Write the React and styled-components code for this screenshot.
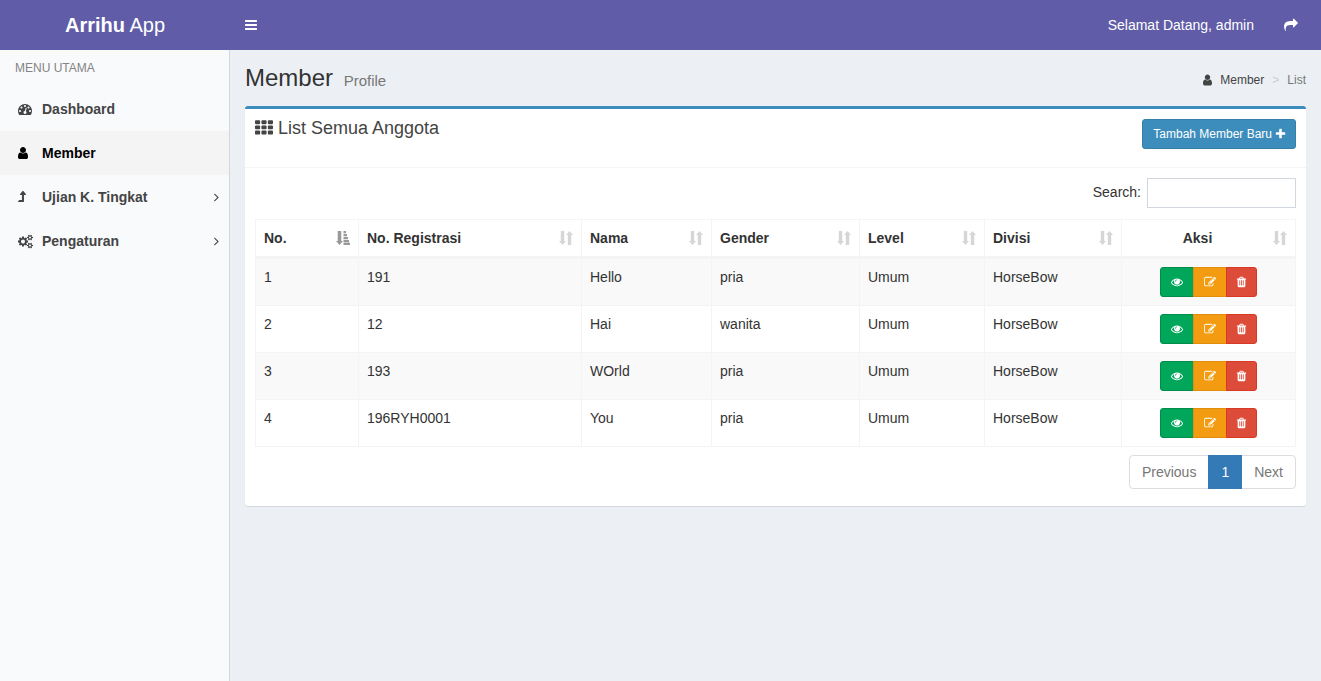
import React, { useState } from 'react';
import styled, { createGlobalStyle, css } from 'styled-components';

const GlobalStyle = createGlobalStyle`
  *, *::before, *::after { box-sizing: border-box; }
  body {
    margin: 0;
    background: #ecf0f5;
    color: #333;
    font-family: "Liberation Sans", Arial, sans-serif;
    font-size: 14px;
    line-height: 20px;
  }
  a { text-decoration: none; color: inherit; }
  button, input { font-family: inherit; }
`;

/* Icon outlines on a 1792-unit grid: [left, width, path] */
const dot = 'q0-53-37.5-90.5t-90.5-37.5-90.5 37.5-37.5 90.5 37.5 90.5 90.5 37.5 90.5-37.5 37.5-90.5z';
const smallCog =
  'v140q0 16-149 31-12 27-30 52 51 113 51 138 0 4-4 7-122 71-124 71-8 0-46-47t-52-68q-20 2-30 2t-30-2q-14 21-52 68t-46 47q-2 0-124-71-4-3-4-7 0-25 51-138-18-25-30-52-149-15-149-31v-140q0-16 149-31 13-29 30-52-51-113-51-138 0-4 4-7 4-2 35-20t59-34 30-16q8 0 46 46.5t52 67.5q20-2 30-2t30 2q51-71 92-112l6-2q4 0 124 70 4 3 4 7 0 25-51 138 17 23 30 52 149 15 149 31z';
const bar = 'v128q0 26-19 45t-45 19h-1408q-26 0-45-19t-19-45v-128q0-26 19-45t45-19h1408q26 0 45 19t19 45z';
const cell = 'v192q0 40-28 68t-68 28h-320q-40 0-68-28t-28-68v-192q0-40 28-68t68-28h320q40 0 68 28t28 68z';
const slot = 'v-704q0-14-9-23t-23-9h-64q-14 0-23 9t-9 23v704q0 14 9 23t23 9h64q14 0 23-9t9-23z';

const ICONS = {
  bars: [128, 1536, `M1664 1344${bar}M1664 832${bar}M1664 320${bar}`],
  th: [0, 1792, [512, 1152, 1792].map((x) => [224, 736, 1248].map((y) => `M${x} ${y}${cell}`).join('')).join('')],
  plus: [192, 1408, 'M1600 736v192q0 40-28 68t-68 28h-416v416q0 40-28 68t-68 28h-192q-40 0-68-28t-28-68v-416h-416q-40 0-68-28t-28-68v-192q0-40 28-68t68-28h416v-416q0-40 28-68t68-28h192q40 0 68 28t28 68v416h416q40 0 68 28t28 68z'],
  eye: [0, 1792, 'M1664 960q-152-236-381-353 61 104 61 225 0 185-131.5 316.5t-316.5 131.5-316.5-131.5-131.5-316.5q0-121 61-225-229 117-381 353 133 205 333.5 326.5t434.5 121.5 434.5-121.5 333.5-326.5zm-720-384q0-20-14-34t-34-14q-125 0-214.5 89.5t-89.5 214.5q0 20 14 34t34 14 34-14 14-34q0-86 61-147t147-61q20 0 34-14t14-34zm848 384q0 34-20 69-140 230-376.5 368.5t-499.5 138.5-499.5-139-376.5-368q-20-35-20-69t20-69q140-229 376.5-368t499.5-139 499.5 139 376.5 368q20 35 20 69z'],
  edit: [0, 1792, 'M888 1184l116-116-152-152-116 116v56h96v96h56zm440-720q-16-16-33 1l-350 350q-17 17-1 33t33-1l350-350q17-17 1-33zm80 594v190q0 119-84.5 203.5t-203.5 84.5h-832q-119 0-203.5-84.5t-84.5-203.5v-832q0-119 84.5-203.5t203.5-84.5h832q63 0 117 25 15 7 18 23 3 17-9 29l-49 49q-14 14-32 8-23-6-45-6h-832q-66 0-113 47t-47 113v832q0 66 47 113t113 47h832q66 0 113-47t47-113v-126q0-13 9-22l64-64q15-15 35-7t20 29zm-96-738l288 288-672 672h-288v-288zm444 132l-92 92-288-288 92-92q28-28 68-28t68 28l152 152q28 28 28 68t-28 68z'],
  trash: [192, 1408, `M704 1376${slot}M960 1376${slot}M1216 1376${slot}M672 384h448l-48-117q-7-9-17-11h-317q-10 2-17 11zm928 32v64q0 14-9 23t-23 9h-96v948q0 83-47 143.5t-113 60.5h-832q-66 0-113-58.5t-47-141.5v-952h-96q-14 0-23-9t-9-23v-64q0-14 9-23t23-9h309l70-167q15-37 54-63t79-26h320q40 0 79 26t54 63l70 167h309q14 0 23 9t9 23z`],
  share: [0, 1792, 'M1792 640q0 26-19 45l-512 512q-19 19-45 19t-45-19-19-45v-256h-224q-98 0-175.5 6t-154 21.5-133 42.5-105.5 69.5-80 101-48.5 138.5-17.5 181q0 55 5 123 0 6 2.5 23.5t2.5 26.5q0 15-8.5 25t-23.5 10q-16 0-28-17-7-9-13-22t-13.5-30-10.5-24q-127-285-127-451 0-199 53-333 162-403 875-403h224v-256q0-26 19-45t45-19 45 19l512 512q19 19 19 45z'],
  user: [256, 1280, 'M1536 1399q0 109-62.5 187t-150.5 78h-854q-88 0-150.5-78t-62.5-187q0-85 8.5-160.5t31.5-152 58.5-131 94-89 134.5-34.5q131 128 313 128t313-128q76 0 134.5 34.5t94 89 58.5 131 31.5 152 8.5 160.5zm-256-887q0 159-112.5 271.5t-271.5 112.5-271.5-112.5-112.5-271.5 112.5-271.5 271.5-112.5 271.5 112.5 112.5 271.5z'],
  dashboard: [0, 1792, `M384 1152${dot}M576 704${dot}M1004 1185l101-382q6-26-7.5-48.5t-38.5-29.5-48 6.5-30 39.5l-101 382q-60 5-107 43.5t-63 98.5q-20 77 20 146t117 89 146-20 89-117q16-60-6-117t-72-91zM1664 1152${dot}M1024 512${dot}M1472 704${dot}M1792 1152q0 261-141 483-19 29-54 29h-1402q-35 0-54-29-141-221-141-483 0-182 71-348t191-286 286-191 348-71 348 71 286 191 191 286 71 348z`],
  levelUp: [288, 1024, 'M1299 587q-18 37-58 37h-192v864q0 14-9 23t-23 9h-704q-21 0-29-18-8-20 4-35l160-192q9-11 25-11h320v-640h-192q-40 0-58-37-17-37 9-68l320-384q18-22 49-22t49 22l320 384q27 32 9 68z'],
  cogs: [0, 1920, `M896 960q0-106-75-181t-181-75-181 75-75 181 75 181 181 75 181-75 75-181zm768 512q0-52-38-90t-90-38-90 38-38 90q0 53 37.5 90.5t90.5 37.5 90.5-37.5 37.5-90.5zm0-1024q0-52-38-90t-90-38-90 38-38 90q0 53 37.5 90.5t90.5 37.5 90.5-37.5 37.5-90.5zm-384 421v185q0 10-7 19.5t-16 10.5l-155 24q-11 35-32 76 34 48 90 115 7 11 7 20 0 12-7 19-23 30-82.5 89.5t-78.5 59.5q-11 0-21-7l-115-90q-37 19-77 31-11 108-23 155-7 24-30 24h-186q-11 0-20-7.5t-10-17.5l-23-153q-34-10-75-31l-118 89q-7 7-20 7-11 0-21-8-144-133-144-160 0-9 7-19 10-14 41-53t47-61q-23-44-35-82l-152-24q-10-1-17-9.5t-7-19.5v-185q0-10 7-19.5t16-10.5l155-24q11-35 32-76-34-48-90-115-7-11-7-20 0-12 7-20 22-30 82-89t79-59q11 0 21 7l115 90q34-18 77-32 11-108 23-154 7-24 30-24h186q11 0 20 7.5t10 17.5l23 153q34 10 75 31l118-89q8-7 20-7 11 0 21 8 144 133 144 160 0 8-7 19-12 16-42 54t-45 60q23 48 34 82l152 23q10 2 17 10.5t7 19.5zM1920 1402${smallCog}M1920 378${smallCog}`],
  angleRight: [576, 640, 'M1171 960q0 13-10 23l-466 466q-10 10-23 10t-23-10l-50-50q-10-10-10-23t10-23l393-393-393-393q-10-10-10-23t10-23l50-50q10-10 23-10t23 10l466 466q10 10 10 23z'],
};

const Glyph = styled.svg`
  display: block;
  flex: none;
  fill: currentColor;
`;

function Icon({ name, size = 14 }) {
  const [left, width, path] = ICONS[name];
  return (
    <Glyph
      width={Math.round((width / 1792) * size)}
      height={size}
      viewBox={`${left} 0 ${width} 1792`}
      preserveAspectRatio="xMidYMid slice"
      overflow="visible"
      aria-hidden="true"
    >
      <path d={path} />
    </Glyph>
  );
}

function SortIcon({ active }) {
  return (
    <Glyph width="14" height="14" viewBox="0 0 14 14" aria-hidden="true">
      {active ? (
        <path d="M1.700 0h3.600v10H7L3.500 14 0 10h1.700zM7.500 0h2.500v2.200H7.500zM7.500 3h3.500v2.200H7.500zM7.500 6h4.500v2.200H7.500zM7.500 9h5.500v2.200H7.500zM7.500 11.800h6.500V14H7.500z" />
      ) : (
        <path d="M1.800 0h3.400v10H7L3.500 14 0 10h1.800zM8.800 14h3.400V4H14L10.500 0 7 4h1.800z" />
      )}
    </Glyph>
  );
}

const Header = styled.header`
  display: flex;
  height: 50px;
  background: #605ca8;
  color: #fff;
`;

const Logo = styled.a`
  flex: 0 0 230px;
  font-size: 20px;
  line-height: 50px;
  text-align: center;
`;

const Navbar = styled.nav`
  flex: 1;
  display: flex;
  align-items: center;
  padding-right: 8px;
`;

const Toggle = styled.button`
  padding: 15px;
  border: 0;
  background: none;
  color: inherit;
  cursor: pointer;
`;

const NavLink = styled.a`
  display: block;
  padding: 15px;
`;

const Welcome = styled.span`
  margin-left: auto;
  padding: 15px;
`;

const Layout = styled.div`
  display: flex;
  min-height: calc(100vh - 50px);
`;

const Sidebar = styled.aside`
  flex: 0 0 230px;
  background: #f9fafc;
  border-right: 1px solid #d2d6de;
`;

const MenuTitle = styled.div`
  padding: 10px 15px;
  color: #848484;
  font-size: 12px;
  line-height: 17px;
`;

const MenuList = styled.ul`
  margin: 0;
  padding: 0;
  list-style: none;
`;

const MenuLink = styled.a`
  display: flex;
  align-items: center;
  padding: 12px 10px 12px 18px;
  font-weight: bold;
  color: ${(p) => (p.$active ? '#000' : '#444')};
  background: ${(p) => (p.$active ? '#f4f4f5' : 'transparent')};
`;

const MenuIcon = styled.span`
  width: 24px;
`;

const MenuLabel = styled.span`
  flex: 1;
`;

const Main = styled.main`
  flex: 1;
  min-width: 0;
  padding: 15px;
`;

const PageHeader = styled.div`
  display: flex;
  align-items: center;
  justify-content: space-between;
  margin-bottom: 15px;
`;

const PageTitle = styled.h1`
  margin: 0;
  font-size: 24px;
  font-weight: normal;
  line-height: 26px;
`;

const Subtitle = styled.small`
  padding-left: 4px;
  font-size: 15px;
  line-height: 15px;
  color: #777;
`;

const Breadcrumb = styled.ol`
  display: flex;
  gap: 8px;
  margin: 0;
  padding: 4px 0 0;
  list-style: none;
  font-size: 12px;
  line-height: 18px;
  color: #777;
`;

const Crumb = styled.li`
  color: ${(p) => (p.$separator ? '#ccc' : 'inherit')};
`;

const CrumbLink = styled.a`
  display: flex;
  align-items: center;
  gap: 8px;
  color: #444;
`;

const Box = styled.section`
  background: #fff;
  border-top: 3px solid #3c8dbc;
  border-radius: 3px;
  box-shadow: 0 1px 1px rgba(0, 0, 0, 0.1);
`;

const BoxHeader = styled.div`
  display: flex;
  align-items: flex-start;
  justify-content: space-between;
  padding: 10px 10px 18px;
  border-bottom: 1px solid #f4f4f4;
`;

const BoxTitle = styled.h3`
  display: flex;
  align-items: center;
  gap: 5px;
  margin: 0;
  color: #444;
  font-size: 18px;
  font-weight: normal;
  line-height: 18px;
`;

const AddButton = styled.button`
  display: flex;
  align-items: center;
  gap: 4px;
  padding: 5px 10px;
  border: 1px solid #367fa9;
  border-radius: 3px;
  background: #3c8dbc;
  color: #fff;
  font-size: 12px;
  line-height: 18px;
  cursor: pointer;
`;

const BoxBody = styled.div`
  padding: 10px 10px 17px;
`;

const SearchLabel = styled.label`
  display: flex;
  align-items: baseline;
  justify-content: flex-end;
  gap: 6px;
  margin-bottom: 11px;
`;

const SearchInput = styled.input`
  width: 149px;
  height: 30px;
  padding: 5px 10px;
  border: 1px solid #d2d6de;
  border-radius: 0;
  background: #fff;
  font-size: 12px;
`;

const Table = styled.table`
  width: 100%;
  table-layout: fixed;
  border-collapse: separate;
  border-spacing: 0;
`;

const cellStyle = css`
  padding: 8px;
  border: 0 solid #f4f4f4;
  border-width: 1px 0 0 1px;
  text-align: left;
  vertical-align: top;
  &:last-child {
    border-right-width: 1px;
    text-align: center;
  }
`;

const HeadCell = styled.th`
  ${cellStyle}
  position: relative;
  padding-right: 30px;
  border-bottom-width: 2px;
  white-space: nowrap;
`;

const SortMark = styled.span`
  position: absolute;
  right: 8px;
  bottom: 11px;
  color: ${(p) => (p.$active ? '#999' : '#d6d6d6')};
`;

const Row = styled.tr`
  &:nth-child(odd) { background: #f9f9f9; }
  &:last-child > td { border-bottom-width: 1px; }
`;

const Cell = styled.td`
  ${cellStyle}
`;

const ButtonGroup = styled.div`
  display: flex;
  justify-content: center;
`;

const tones = {
  success: ['#00a65a', '#008d4c'],
  warning: ['#f39c12', '#e08e0b'],
  danger: ['#dd4b39', '#d73925'],
};

const ActionButton = styled.button`
  padding: 8px 10px;
  border: 1px solid ${(p) => tones[p.$tone][1]};
  background: ${(p) => tones[p.$tone][0]};
  color: #fff;
  cursor: pointer;
  &:first-child { border-radius: 3px 0 0 3px; }
  &:last-child { border-radius: 0 3px 3px 0; }
  & + & { margin-left: -1px; }
`;

const Pagination = styled.nav`
  display: flex;
  justify-content: flex-end;
  margin-top: 8px;
`;

const PageButton = styled.button`
  padding: 6px 12px;
  border: 1px solid ${(p) => (p.$active ? '#337ab7' : '#ddd')};
  background: ${(p) => (p.$active ? '#337ab7' : '#fff')};
  color: ${(p) => (p.$active ? '#fff' : '#777')};
  font-size: 14px;
  line-height: 20px;
  z-index: ${(p) => (p.$active ? 1 : 0)};
  &:first-child { border-radius: 4px 0 0 4px; }
  &:last-child { border-radius: 0 4px 4px 0; }
  & + & { margin-left: -1px; }
`;

const MENU = [
  { label: 'Dashboard', icon: 'dashboard' },
  { label: 'Member', icon: 'user', active: true },
  { label: 'Ujian K. Tingkat', icon: 'levelUp', children: true },
  { label: 'Pengaturan', icon: 'cogs', children: true },
];

const COLUMNS = [
  { label: 'No.', width: 103 },
  { label: 'No. Registrasi', width: 223 },
  { label: 'Nama', width: 130 },
  { label: 'Gender', width: 148 },
  { label: 'Level', width: 125 },
  { label: 'Divisi', width: 137 },
  { label: 'Aksi', width: 175 },
];

const MEMBERS = [
  ['1', '191', 'Hello', 'pria', 'Umum', 'HorseBow'],
  ['2', '12', 'Hai', 'wanita', 'Umum', 'HorseBow'],
  ['3', '193', 'WOrld', 'pria', 'Umum', 'HorseBow'],
  ['4', '196RYH0001', 'You', 'pria', 'Umum', 'HorseBow'],
];

const ACTIONS = [
  { tone: 'success', icon: 'eye', label: 'Lihat' },
  { tone: 'warning', icon: 'edit', label: 'Edit' },
  { tone: 'danger', icon: 'trash', label: 'Hapus' },
];

export default function App() {
  const [query, setQuery] = useState('');
  const rows = MEMBERS.filter((m) => m.join(' ').toLowerCase().includes(query.toLowerCase()));

  return (
    <>
      <GlobalStyle />
      <Header>
        <Logo href="#"><b>Arrihu</b> App</Logo>
        <Navbar>
          <Toggle type="button" aria-label="Toggle navigation"><Icon name="bars" /></Toggle>
          <Welcome>Selamat Datang, admin</Welcome>
          <NavLink href="#" aria-label="Keluar"><Icon name="share" /></NavLink>
        </Navbar>
      </Header>
      <Layout>
        <Sidebar>
          <MenuTitle>MENU UTAMA</MenuTitle>
          <MenuList>
            {MENU.map((item) => (
              <li key={item.label}>
                <MenuLink href="#" $active={item.active}>
                  <MenuIcon><Icon name={item.icon} /></MenuIcon>
                  <MenuLabel>{item.label}</MenuLabel>
                  {item.children && <Icon name="angleRight" />}
                </MenuLink>
              </li>
            ))}
          </MenuList>
        </Sidebar>
        <Main>
          <PageHeader>
            <PageTitle>Member <Subtitle>Profile</Subtitle></PageTitle>
            <Breadcrumb>
              <Crumb><CrumbLink href="#"><Icon name="user" size={12} />Member</CrumbLink></Crumb>
              <Crumb $separator aria-hidden="true">&gt;</Crumb>
              <Crumb>List</Crumb>
            </Breadcrumb>
          </PageHeader>
          <Box>
            <BoxHeader>
              <BoxTitle><Icon name="th" size={18} />List Semua Anggota</BoxTitle>
              <AddButton type="button">Tambah Member Baru<Icon name="plus" size={12} /></AddButton>
            </BoxHeader>
            <BoxBody>
              <SearchLabel>
                Search:
                <SearchInput type="search" value={query} onChange={(e) => setQuery(e.target.value)} />
              </SearchLabel>
              <Table>
                <colgroup>
                  {COLUMNS.map((c) => <col key={c.label} width={c.width} />)}
                </colgroup>
                <thead>
                  <tr>
                    {COLUMNS.map((c, i) => (
                      <HeadCell key={c.label} scope="col">
                        {c.label}
                        <SortMark $active={i === 0}><SortIcon active={i === 0} /></SortMark>
                      </HeadCell>
                    ))}
                  </tr>
                </thead>
                <tbody>
                  {rows.map((member) => (
                    <Row key={member[0]}>
                      {member.map((value, i) => <Cell key={COLUMNS[i].label}>{value}</Cell>)}
                      <Cell>
                        <ButtonGroup>
                          {ACTIONS.map((a) => (
                            <ActionButton key={a.icon} type="button" $tone={a.tone} aria-label={a.label}>
                              <Icon name={a.icon} size={12} />
                            </ActionButton>
                          ))}
                        </ButtonGroup>
                      </Cell>
                    </Row>
                  ))}
                </tbody>
              </Table>
              <Pagination aria-label="Halaman">
                <PageButton type="button">Previous</PageButton>
                <PageButton type="button" $active>1</PageButton>
                <PageButton type="button">Next</PageButton>
              </Pagination>
            </BoxBody>
          </Box>
        </Main>
      </Layout>
    </>
  );
}
